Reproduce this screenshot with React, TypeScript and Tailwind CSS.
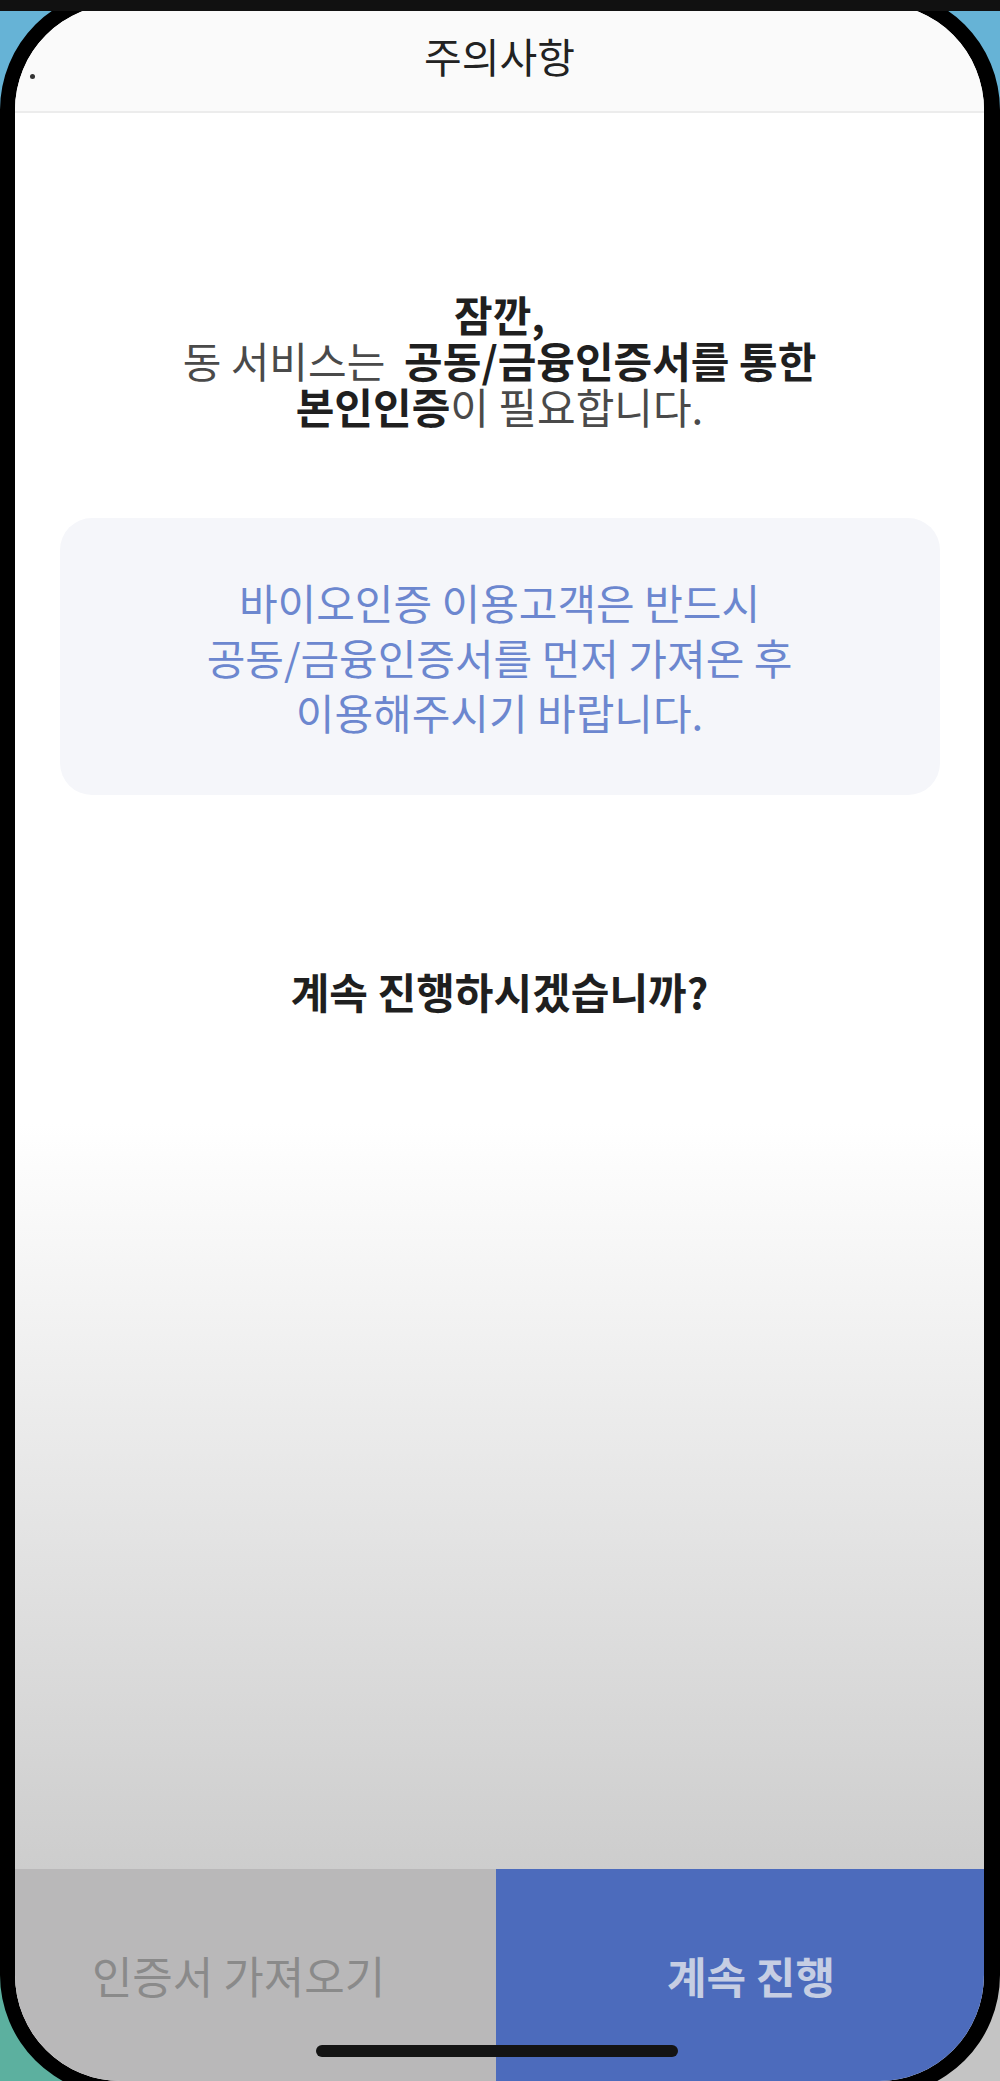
const font = "font-['Noto_Sans_CJK_KR','Noto_Sans',sans-serif]";

function Header() {
  return (
    <div className="relative flex h-[109px] shrink-0 items-center justify-center border-b-2 border-[#ececec] bg-[#fafafa] pb-[5px]">
      {/* tip of the back button, mostly hidden under the frame */}
      <span className="absolute left-[15px] top-[70px] h-[5px] w-[5px] rounded-full bg-[#333]" />
      <span className="text-[41px] leading-none text-[#222]">주의사항</span>
    </div>
  );
}

function Notice() {
  return (
    <div className="flex flex-1 flex-col items-center bg-[linear-gradient(to_bottom,#ffffff_0px,#ffffff_1010px,#cdcdcd_100%)] pt-[178px]">
      <div className="text-center text-[42px] leading-[46px] text-[#4a4a4a]">
        <p className="font-bold text-[#1f1f1f]">잠깐,</p>
        <p>
          동 서비스는&nbsp; <b className="font-bold text-[#1f1f1f]">공동/금융인증서를 통한</b>
        </p>
        <p>
          <b className="font-bold text-[#1f1f1f]">본인인증</b>이 필요합니다.
        </p>
      </div>

      <div className="mt-[89px] flex h-[277px] w-[880px] items-center justify-center rounded-[32px] bg-[#f5f6fa] text-center text-[42px] leading-[55px] text-[#6c87cf]">
        <p>
          바이오인증 이용고객은 반드시
          <br />
          공동/금융인증서를 먼저 가져온 후
          <br />
          이용해주시기 바랍니다.
        </p>
      </div>

      <p className="mt-[173px] text-[42px] font-bold leading-[46px] text-[#1f1f1f]">계속 진행하시겠습니까?</p>
    </div>
  );
}

function Actions() {
  return (
    <div className="flex h-[212px] shrink-0">
      <button className="flex w-[481px] items-center justify-center bg-[#b9b8b9] pr-[34px] text-[44px] text-[#8a8a8a]">
        인증서 가져오기
      </button>
      <button className="flex flex-1 items-center justify-center bg-[#4c6bbc] pl-[22px] text-[43px] font-bold text-[#c6cee3]">
        계속 진행
      </button>
    </div>
  );
}

export default function App() {
  return (
    <div className={`relative h-[2081px] w-[1000px] overflow-hidden bg-[linear-gradient(to_right,#5cb09f_50%,#c4c4c4_50%)] ${font}`}>
      <div className="h-full w-full bg-[linear-gradient(to_bottom,#66b3d6_50%,transparent_50%)]">
        {/* phone body */}
        <div className="-mt-[11px] flex h-[2107px] w-[1000px] flex-col overflow-hidden rounded-[121px] border-[15px] border-r-[16px] border-black bg-white">
          <Header />
          <Notice />
          <Actions />
        </div>
      </div>

      {/* top edge of the frame */}
      <div className="absolute left-0 top-0 h-[11px] w-full bg-[#111]" />

      {/* home indicator */}
      <div className="absolute left-[316px] top-[2045px] h-[12px] w-[362px] rounded-full bg-[#141414]" />
    </div>
  );
}
